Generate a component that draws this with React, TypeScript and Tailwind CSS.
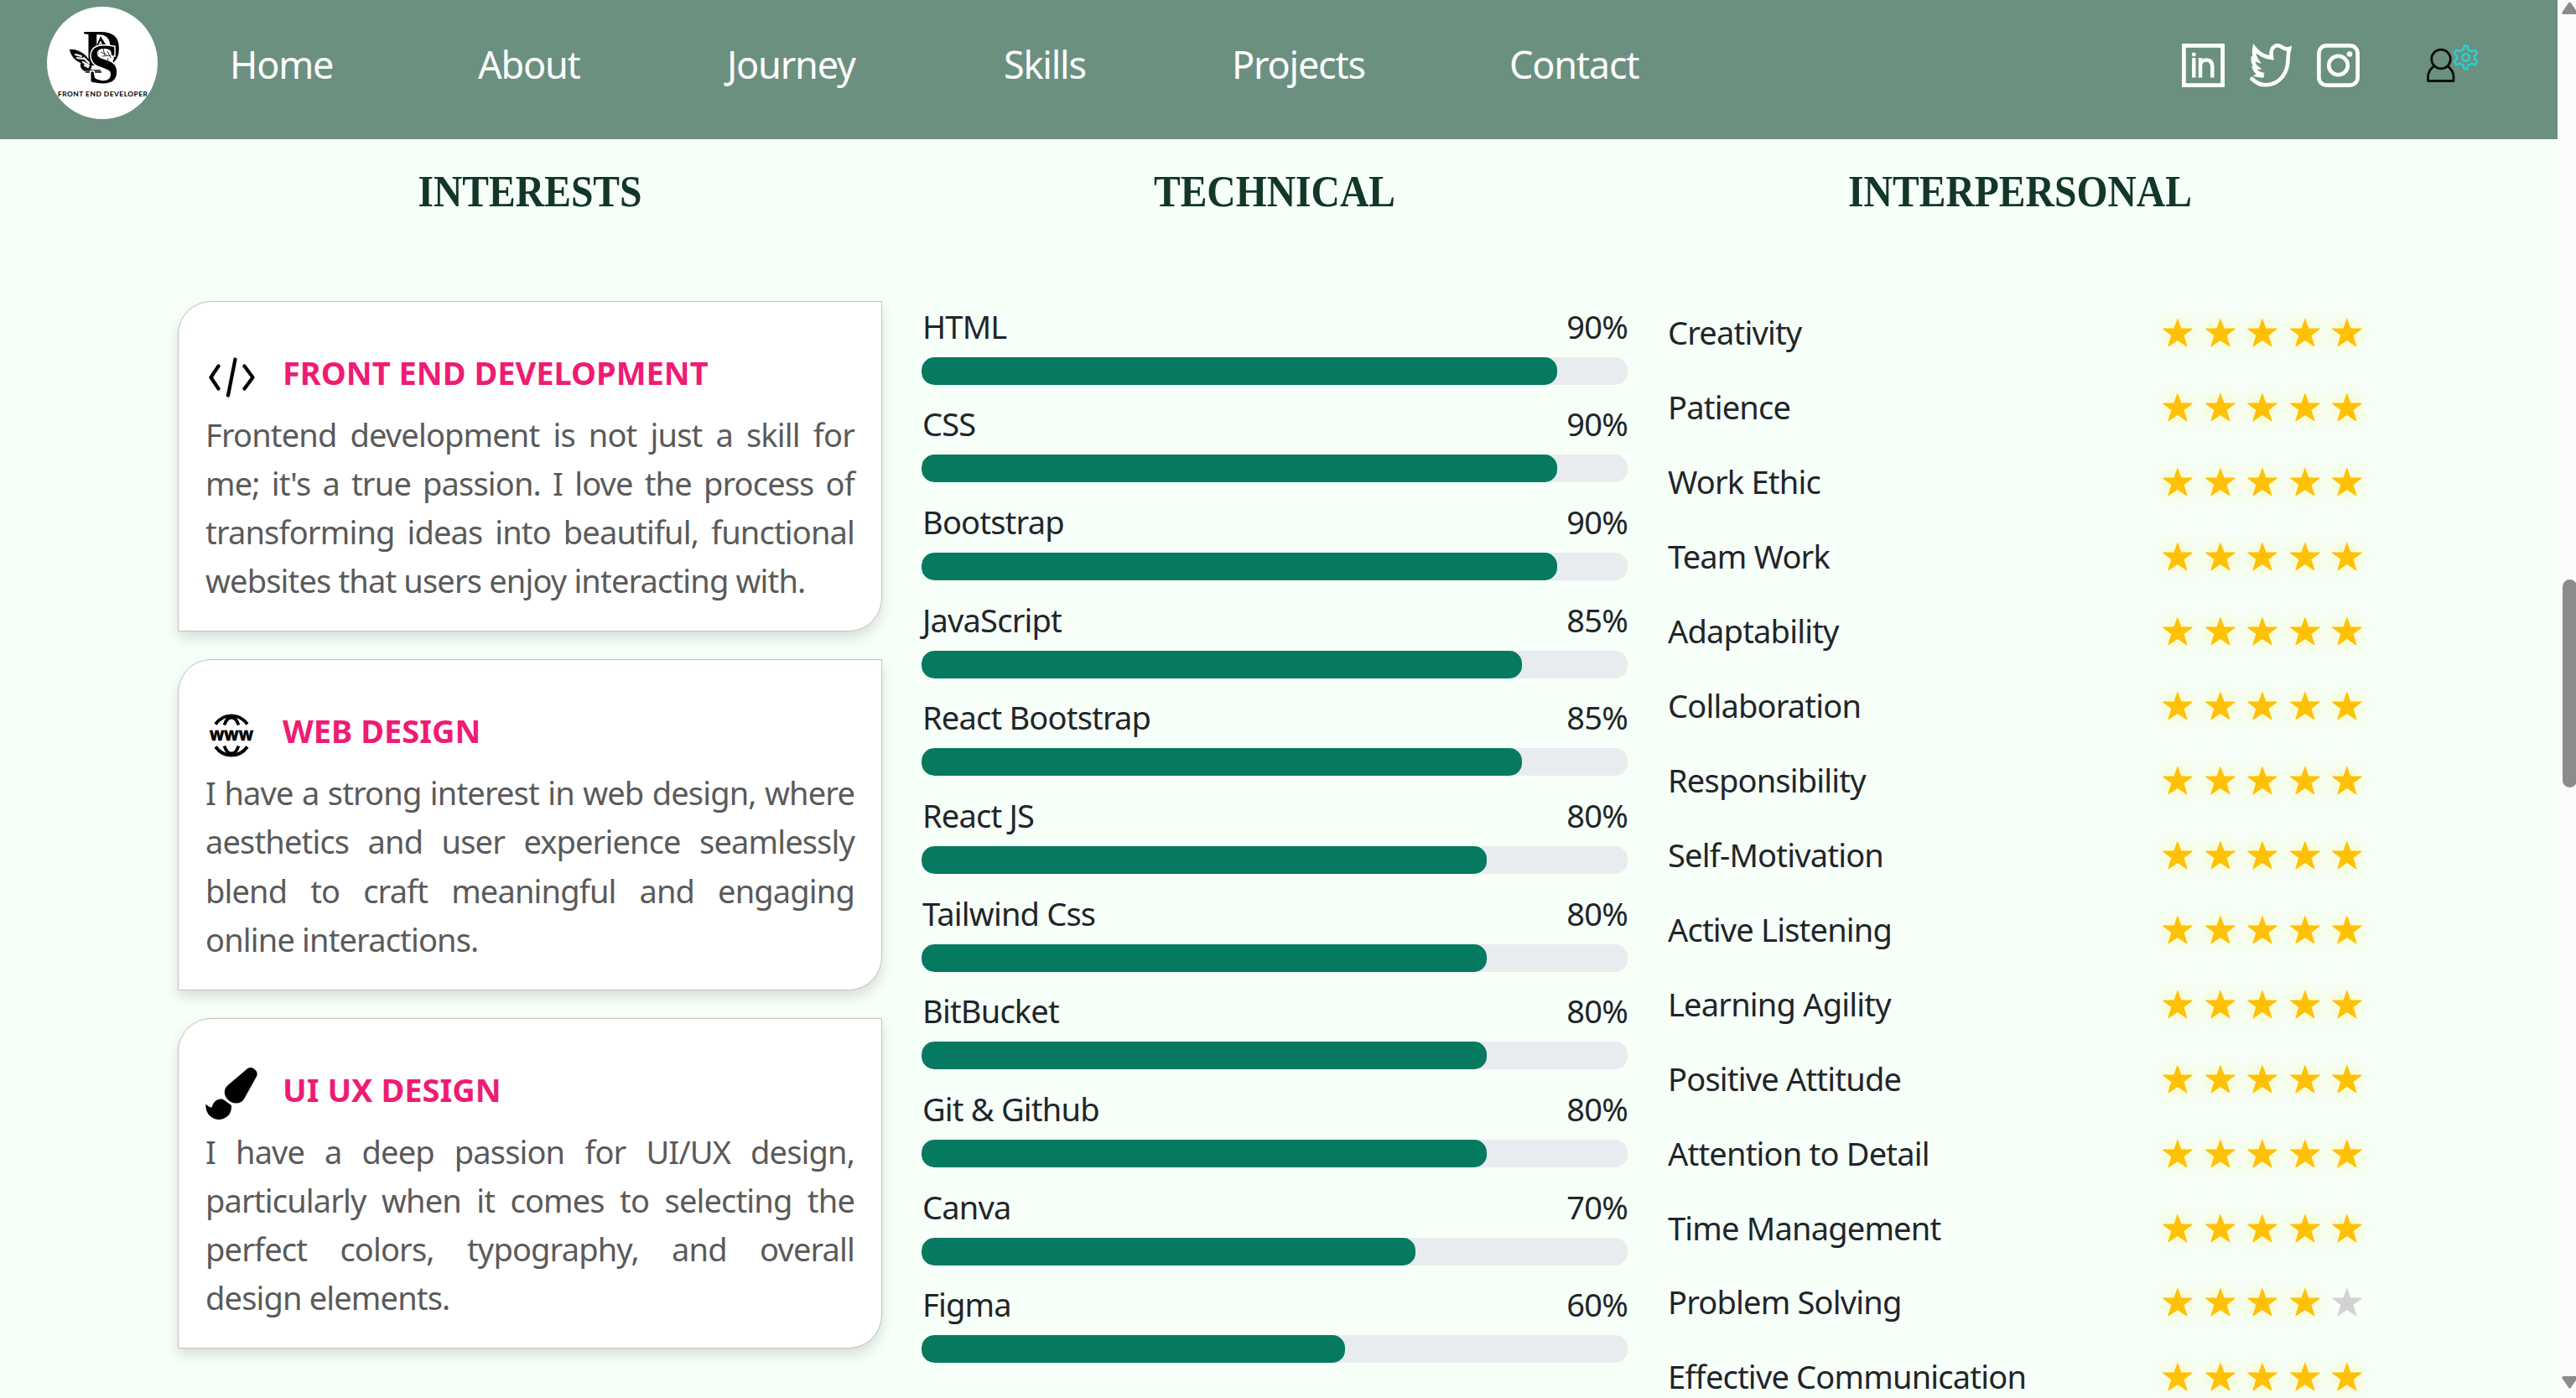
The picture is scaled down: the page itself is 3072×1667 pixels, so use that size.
import React from "react";

const nav = [
  { label: "Home", box: "w-[296px]" },
  { label: "About", box: "w-[297px]" },
  { label: "Journey", box: "w-[330px]" },
  { label: "Skills", box: "w-[272px]" },
  { label: "Projects", box: "w-[331px]" },
  { label: "Contact", box: "w-[200px]" },
];

const technical: [string, number][] = [
  ["HTML", 90],
  ["CSS", 90],
  ["Bootstrap", 90],
  ["JavaScript", 85],
  ["React Bootstrap", 85],
  ["React JS", 80],
  ["Tailwind Css", 80],
  ["BitBucket", 80],
  ["Git & Github", 80],
  ["Canva", 70],
  ["Figma", 60],
];

const interpersonal: [string, number][] = [
  ["Creativity", 5],
  ["Patience", 5],
  ["Work Ethic", 5],
  ["Team Work", 5],
  ["Adaptability", 5],
  ["Collaboration", 5],
  ["Responsibility", 5],
  ["Self-Motivation", 5],
  ["Active Listening", 5],
  ["Learning Agility", 5],
  ["Positive Attitude", 5],
  ["Attention to Detail", 5],
  ["Time Management", 5],
  ["Problem Solving", 4],
  ["Effective Communication", 5],
];

function Logo() {
  return (
    <svg width="132" height="134" viewBox="0 0 132 134" className="shrink-0">
      <defs>
        <clipPath id="disc">
          <ellipse cx="66" cy="67" rx="66" ry="67" />
        </clipPath>
      </defs>
      <ellipse cx="66" cy="67" rx="66" ry="67" fill="#fff" />
      <text x="43" y="70" fontFamily="Liberation Serif, serif" fontWeight="700" fontSize="61" textLength="46" lengthAdjust="spacingAndGlyphs">D</text>
      {/* butterfly wings */}
      <path d="M27 51c6-1 14 2 20 8l7 10-2 7c-5 0-10-4-12-9-7-3-12-9-13-16z" fill="#0a0a0a" />
      <path d="M40 68c-1 5 3 9 6 8l7-4z" fill="#0a0a0a" />
      <path d="M34 57l7 2M36 61l7 1M44 61l6 6M43 66l7 4M45 70l4 2" stroke="#fff" strokeWidth="2.2" strokeLinecap="round" />
      <path d="M44 76h20M46 78h19" stroke="#0a0a0a" strokeWidth="1.4" />
      <path d="M64 35l6 10 3 13-7 9-8-4-1-12z" fill="#0a0a0a" />
      <path d="M60 50l9-4 7 6 5 9-3 8-7 6-9-11z" fill="#fff" stroke="#0a0a0a" strokeWidth="1.6" />
      <path d="M62 46l2-4 2 5M60 50l3-1" stroke="#fff" strokeWidth="1.3" fill="none" />
      <text x="49" y="91" fontFamily="Liberation Serif, serif" fontWeight="700" fontSize="67" textLength="37" lengthAdjust="spacingAndGlyphs" stroke="#fff" strokeWidth="3" paintOrder="stroke">S</text>
      <path d="M64 54l7 3M67 50l2 8M72 53l4 8M66 59l10-1M73 61l-1 7" stroke="#333" strokeWidth="1" />
      <g clipPath="url(#disc)">
        <text x="13" y="107" fontFamily="Lato, sans-serif" fontWeight="700" fontSize="8.400" textLength="107" lengthAdjust="spacing">FRONT END DEVELOPER</text>
      </g>
    </svg>
  );
}

function LinkedIn() {
  return (
    <svg width="51" height="52" viewBox="0 0 51 52" fill="none" stroke="#fff">
      <rect x="2.4" y="2.4" width="46.2" height="47.2" strokeWidth="4.8" />
      <path d="M14.3 17v23.5" strokeWidth="4.4" />
      <circle cx="14.3" cy="13" r="2.4" fill="#fff" stroke="none" />
      <path d="M22 17v23.5M22 27c0-5 3-7.500 7-7.500 5 0 7.300 3 7.300 8v13" strokeWidth="4.4" />
    </svg>
  );
}

function Twitter() {
  return (
    <svg width="50" height="52" viewBox="0 0 50 52" fill="none" stroke="#fff" strokeWidth="4.600" strokeLinejoin="miter" strokeLinecap="round">
      <path d="M2.600 42c5 5 10.500 7.400 17 7.200 17-.6 26-15 26-31.500 0-4 .2-7 1.600-11.700-3 .9-5.800.6-8.200-1.400-7.200-5.300-15.500-1.200-13 12.400C17.500 16 10.500 12 5.500 5.500 4.500 11 5 15 8 19.500L3.800 18c-.2 4.500 1.400 8 4.800 10.700L5.200 29c1.300 3.800 4 6 7.300 7l-2.500 1.500 4.800.9" />
    </svg>
  );
}

function Instagram() {
  return (
    <svg width="51" height="52" viewBox="0 0 51 52" fill="none" stroke="#fff" strokeWidth="4.6">
      <rect x="2.4" y="2.4" width="46.2" height="47.2" rx="9" />
      <circle cx="25.500" cy="26" r="11.300" />
      <circle cx="39" cy="12.500" r="3.300" fill="#fff" stroke="none" />
    </svg>
  );
}

function UserGear() {
  return (
    <svg width="63" height="48" viewBox="0 0 63 48" fill="none">
      <g stroke="#0c0f0e" strokeWidth="2.800">
        <circle cx="18" cy="18.500" r="11.300" />
        <path strokeLinejoin="round" d="M10 26.500C5 30 2.500 34.500 2.500 40v4.500h30.500V40c0-5.500-2.500-10-7.500-13.500" />
      </g>
      <g stroke="#29cfcf" strokeWidth="2.600" strokeLinejoin="round">
        <circle cx="47.500" cy="16.500" r="4.300" />
        <path d="M45.700 2.500h3.600l1 4.500 4 2.200 4.500-1.500 2.300 4-3 3v3.600l3 3-2.300 4-4.500-1.500-4 2.200-1 4.500h-3.600l-1-4.500-4-2.200-4.500 1.500-2.300-4 3-3v-3.600l-3-3 2.300-4 4.500 1.500 4-2.200z" />
      </g>
    </svg>
  );
}

function CodeIcon() {
  return (
    <svg width="62" height="62" viewBox="0 0 62 62" fill="none" stroke="#000" strokeWidth="4.200" strokeLinecap="round" strokeLinejoin="round">
      <path d="M15.500 18.500L6.500 32 15.500 45.500M46.500 18.500l10 13.500L46.500 45.500M35.500 10.500L27 53.500" />
    </svg>
  );
}

function WebIcon() {
  return (
    <svg width="62" height="62" viewBox="0 0 62 62" fill="none" stroke="#000">
      <path d="M12 18.500C22 5 40 5 50 18.500M12 45.500c10 13.500 28 13.500 38 0" strokeWidth="3.800" />
      <path d="M22.500 19.500c4-12 13-12 17 0M22.500 44.500c4 12 13 12 17 0" strokeWidth="3.800" />
      <text x="5" y="37.500" fill="#000" stroke="#000" strokeWidth=".6" fontFamily="Open Sans, sans-serif" fontWeight="700" fontSize="20.500" textLength="52" lengthAdjust="spacingAndGlyphs">www</text>
    </svg>
  );
}

function BrushIcon() {
  return (
    <svg width="62" height="62" viewBox="0 0 62 62" fill="#000">
      <path d="M50 1.300c2.500-2 5.500-1.700 8 .3 3.300 2.600 4.600 5.300 3 9L46 37.500c-3.500 5.500-9.500 6-15 3.700-5.500-2.700-9-8-8-14 .5-2.700 2-4.700 4-6.500z" />
      <path d="M.4 43.600c3 2.900 5.500 4.600 7.300 3.600C9.500 40.500 14 37 20 37.500c3 1.300 7 4.700 10.800 7.500C32 54 26 61.800 15.500 62 7 61.500-.3 55 .4 43.600z" />
    </svg>
  );
}

const interests = [
  {
    icon: <CodeIcon />,
    title: "FRONT END DEVELOPMENT",
    text: "Frontend development is not just a skill for me; it's a true passion. I love the process of transforming ideas into beautiful, functional websites that users enjoy interacting with.",
  },
  {
    icon: <WebIcon />,
    title: "WEB DESIGN",
    text: "I have a strong interest in web design, where aesthetics and user experience seamlessly blend to craft meaningful and engaging online interactions.",
  },
  {
    icon: <BrushIcon />,
    title: "UI UX DESIGN",
    text: "I have a deep passion for UI/UX design, particularly when it comes to selecting the perfect colors, typography, and overall design elements.",
  },
];

function Star({ on }: { on: boolean }) {
  return (
    <svg
      width="36"
      height="35"
      viewBox="0 0 36 35"
      className={on ? "overflow-visible fill-[#ffc107] drop-shadow-[0_0_9px_rgba(255,235,60,0.5)]" : "overflow-visible fill-[#d3d3d3]"}
    >
      <path d="M17.900.2 22.300 12.600H35.500V13.500L25.500 21 29.600 34.300H28.600L17.900 27 7.200 34.300H6.200L10.300 21 .2 13.500V12.600H13.500Z" />
    </svg>
  );
}

function Heading({ children }: { children: React.ReactNode }) {
  return (
    <h2 className="mt-7 h-[71px] scale-x-[0.915] text-center font-['Liberation_Serif',serif] text-[52px] leading-[70px] font-bold text-[#12372a]">
      {children}
    </h2>
  );
}

export default function App() {
  return (
    <div className="flex h-[1667px] w-[3072px] overflow-hidden bg-[#f6fff8] font-['Noto_Sans',sans-serif]">
      <div className="flex w-[3050px] flex-col">
        <header className="flex h-[165.500px] shrink-0 items-start bg-[#6b9080] pl-14">
          <div className="mt-2">
            <Logo />
          </div>
          <nav className="ml-[86px] flex h-[153px] items-center text-[45px] tracking-[-0.027em] text-white">
            {nav.map((n) => (
              <a key={n.label} className={n.box}>
                {n.label}
              </a>
            ))}
          </nav>
          <div className="mt-[52px] ml-auto flex items-start">
            <LinkedIn />
            <span className="ml-[30px]"><Twitter /></span>
            <span className="ml-[30px]"><Instagram /></span>
            <span className="mr-[94px] ml-[79px]"><UserGear /></span>
          </div>
        </header>

        <main className="flex pl-[212px]">
          <section className="w-[840px]">
            <Heading>INTERESTS</Heading>
            <div className="mt-[94px] flex flex-col gap-[33px]">
              {interests.map((c) => (
                <article
                  key={c.title}
                  className="h-[394.500px] rounded-tl-[40px] rounded-br-[40px] border-[1.500px] border-[#bfc2c0] bg-white px-8 pt-[56px] shadow-[0_8px_16px_rgba(0,0,0,0.13)]"
                >
                  <div className="flex h-[66px] items-center">
                    {c.icon}
                    <h3 className="mb-[10px] ml-[30px] text-[38px] leading-[50px] font-bold whitespace-nowrap text-[#ee1c74]">
                      {c.title}
                    </h3>
                  </div>
                  <p className="mt-[7px] text-justify text-[38px] leading-[58.300px] tracking-[-0.022em] text-[#5a5a5a]">{c.text}</p>
                </article>
              ))}
            </div>
          </section>

          <section className="ml-[47px] w-[842px]">
            <Heading>TECHNICAL</Heading>
            <div className="mt-[94px]">
              {technical.map(([name, pct]) => (
                <div key={name} className="h-[116.700px]">
                  <div className="flex h-[67px] items-start justify-between text-[38px] leading-[60px] tracking-[-0.021em] text-[#212529]">
                    <span className="pl-px">{name}</span>
                    <span>{pct}%</span>
                  </div>
                  <div className="h-[33px] overflow-hidden rounded-[15px] bg-[#e9ecef]">
                    <div className="h-full rounded-[15px] bg-[#067a60]" style={{ width: `${pct}%` }} />
                  </div>
                </div>
              ))}
            </div>
          </section>

          <section className="ml-[47px] w-[842px]">
            <Heading>INTERPERSONAL</Heading>
            <div className="mt-[88px]">
              {interpersonal.map(([name, stars]) => (
                <div key={name} className="flex h-[88.930px] items-center justify-between pr-[13px] text-[38px] tracking-[-0.021em] text-[#212529]">
                  <span className="pl-px">{name}</span>
                  <span className="flex gap-[14.500px]">
                    {[1, 2, 3, 4, 5].map((i) => (
                      <Star key={i} on={i <= stars} />
                    ))}
                  </span>
                </div>
              ))}
            </div>
          </section>
        </main>
      </div>

      <aside className="flex w-[22px] shrink-0 flex-col items-end overflow-hidden bg-[#fcfcfc]">
        <svg width="17" height="15" viewBox="0 0 17 15" className="mt-[2px] shrink-0">
          <path d="M.5 12.500 8 1.500q1.500-2 3 0l7.500 11q0 2.500-2 2.500H2Q0 15 .5 12.500z" fill="#8b8b8b" />
        </svg>
        <div className="mt-[674px] mr-[-1px] h-[248px] w-[17px] shrink-0 rounded-full bg-[#8b8b8b]" />
        <svg width="17" height="15" viewBox="0 0 17 15" className="mt-[702px] shrink-0">
          <path d="M.5 2.500 8 13.500q1.500 2 3 0l7.500-11Q18.500 0 16.500 0H2Q0 0 .5 2.500z" fill="#8b8b8b" />
        </svg>
      </aside>
    </div>
  );
}
